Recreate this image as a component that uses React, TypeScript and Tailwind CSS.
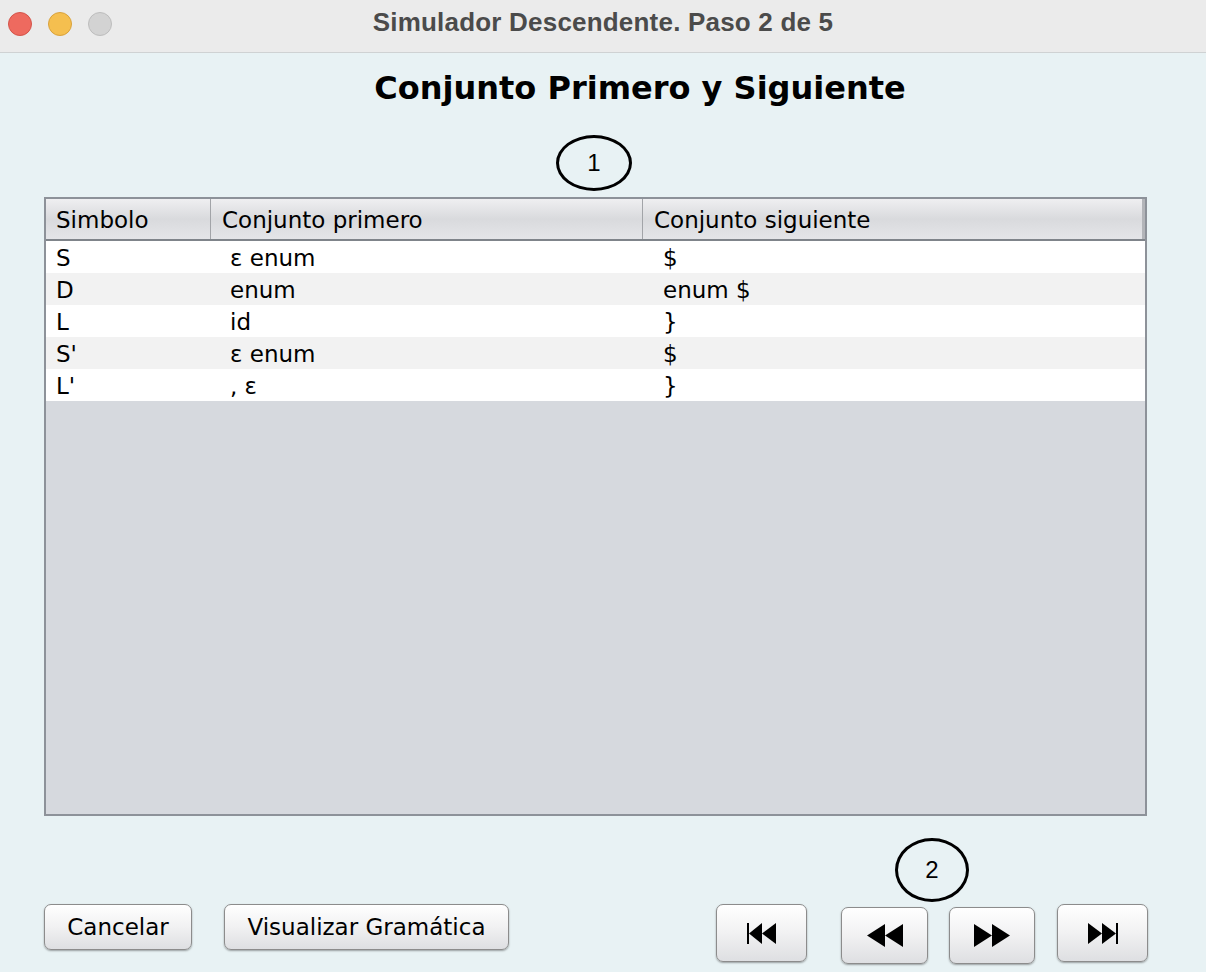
import React from "react";

const rows = [
  ["S", "ε enum", "$"],
  ["D", "enum", "enum $"],
  ["L", "id", "}"],
  ["S'", "ε enum", "$"],
  ["L'", ", ε", "}"],
];

const font = { fontFamily: '"DejaVu Sans", "Liberation Sans", sans-serif' };

function Btn({ className, children }: { className: string; children: React.ReactNode }) {
  return (
    <div
      className={`flex items-center justify-center rounded-[7px] border border-[#8c8c8c] bg-gradient-to-b from-[#ffffff] via-[#f1f1f2] to-[#dedfe2] shadow-[0_1px_2px_rgba(0,0,0,0.35)] text-[23px] text-black ${className}`}
    >
      {children}
    </div>
  );
}

export default function App() {
  return (
    <div className="w-[1206px] h-[972px] bg-[#e8f2f4] flex flex-col overflow-hidden" style={font}>
      {/* title bar */}
      <div className="h-[53px] shrink-0 bg-[#ebebeb] border-b border-[#cfd2d3] grid grid-cols-[1fr_auto_1fr] items-center">
        <div className="flex items-center gap-[16px] pl-[8px] pb-[4px]">
          <div className="w-[24px] h-[24px] rounded-full bg-[#ee6a5f] border border-[#d4544a]" />
          <div className="w-[24px] h-[24px] rounded-full bg-[#f5bf4f] border border-[#d9a23c]" />
          <div className="w-[24px] h-[24px] rounded-full bg-[#d3d3d3] border border-[#bdbdbd]" />
        </div>
        <div
          className="text-[26px] font-bold text-[#4b4b4b] pb-[8px] tracking-[0.2px]"
          style={{ fontFamily: '"Liberation Sans", Arial, sans-serif' }}
        >
          Simulador Descendente. Paso 2 de 5
        </div>
        <div />
      </div>

      {/* heading */}
      <div className="pl-[74px] text-center mt-[16px] h-[38px] text-[32px] font-bold text-black leading-[38px]">
        Conjunto Primero y Siguiente
      </div>

      {/* circle 1 */}
      <div
        className="ml-[556px] mt-[28px] w-[76px] h-[56px] rounded-[50%] border-[3px] border-black flex items-center justify-center text-[24px]"
        style={{ fontFamily: '"Liberation Sans", Arial, sans-serif' }}
      >
        1
      </div>

      {/* table */}
      <div className="ml-[44px] mt-[6px] w-[1103px] h-[619px] border-2 border-[#8d9299] bg-[#d6d9de] flex flex-col">
        <div className="h-[42px] shrink-0 flex bg-gradient-to-b from-[#efeff1] via-[#d9dadd] to-[#e4e5e8] border-b-2 border-[#7f848a] text-[23px] text-black">
          <div className="w-[165px] pl-[10px] pt-[3px] flex items-center border-r border-[#a2a4a8]">Simbolo</div>
          <div className="w-[432px] pl-[11px] pt-[3px] flex items-center border-r border-[#a2a4a8]">Conjunto primero</div>
          <div className="flex-1 pl-[11px] pt-[3px] flex items-center border-r-[3px] border-[#b3b5b9]">Conjunto siguiente</div>
        </div>
        {rows.map((r, i) => (
          <div
            key={i}
            className={`h-[32px] shrink-0 flex items-center pt-[3px] text-[23px] text-black ${i % 2 === 0 ? "bg-white" : "bg-[#f2f2f2]"}`}
          >
            <div className="w-[165px] pl-[10px]">{r[0]}</div>
            <div className="w-[432px] pl-[19px]">{r[1]}</div>
            <div className="flex-1 pl-[20px]">{r[2]}</div>
          </div>
        ))}
      </div>

      {/* circle 2 */}
      <div
        className="ml-[895px] mt-[22px] w-[74px] h-[64px] rounded-[50%] border-[3px] border-black flex items-center justify-center text-[24px]"
        style={{ fontFamily: '"Liberation Sans", Arial, sans-serif' }}
      >
        2
      </div>

      {/* buttons */}
      <div className="flex items-start mt-[2px]">
        <Btn className="ml-[44px] w-[148px] h-[46px]">Cancelar</Btn>
        <Btn className="ml-[32px] w-[285px] h-[46px]">Visualizar Gramática</Btn>
        <Btn className="ml-[207px] w-[91px] h-[58px]">
          <svg width="29" height="21" viewBox="0 0 29 21">
            <rect x="0" y="0" width="2" height="21" fill="black" />
            <polygon points="2,10.5 15,0 15,21" fill="black" />
            <polygon points="15,10.5 29,0 29,21" fill="black" />
          </svg>
        </Btn>
        <Btn className="ml-[34px] mt-[3px] w-[87px] h-[57px]">
          <svg width="36" height="23" viewBox="0 0 36 23">
            <polygon points="0,11.5 18,0 18,23" fill="black" />
            <polygon points="18,11.5 36,0 36,23" fill="black" />
          </svg>
        </Btn>
        <Btn className="ml-[21px] mt-[3px] w-[86px] h-[57px]">
          <svg width="36" height="23" viewBox="0 0 36 23">
            <polygon points="0,0 18,11.5 0,23" fill="black" />
            <polygon points="18,0 36,11.5 18,23" fill="black" />
          </svg>
        </Btn>
        <Btn className="ml-[22px] w-[91px] h-[58px]">
          <svg width="30" height="21" viewBox="0 0 30 21">
            <polygon points="0,0 14,10.5 0,21" fill="black" />
            <polygon points="14,0 28,10.5 14,21" fill="black" />
            <rect x="28" y="0" width="2" height="21" fill="black" />
          </svg>
        </Btn>
      </div>
    </div>
  );
}
